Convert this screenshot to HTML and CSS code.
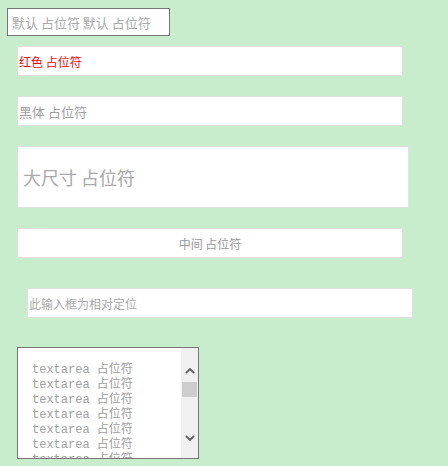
FILE: index.html
```html
<!DOCTYPE html>
<html lang="zh-CN">
<head>
<meta charset="utf-8">
<title>占位符</title>
<link rel="stylesheet" href="styles.css">
</head>
<body>
<input class="field f-default" type="text" placeholder="默认 占位符 默认 占位符">
<input class="field f-wide f-red" type="text" placeholder="红色 占位符">
<input class="field f-wide f-hei" type="text" placeholder="黑体 占位符">
<input class="field f-big" type="text" placeholder="大尺寸 占位符">
<input class="field f-wide f-center" type="text" placeholder="中间 占位符">
<input class="field f-wide f-rel" type="text" placeholder="此输入框为相对定位">
<div class="ta-box">
<textarea class="ta" readonly>textarea 占位符
textarea 占位符
textarea 占位符
textarea 占位符
textarea 占位符
textarea 占位符
textarea 占位符
textarea 占位符
textarea 占位符
textarea 占位符</textarea>
<div class="sbar">
<svg class="chev" width="10" height="6" viewBox="0 0 10 6"><path d="M1 5 L5 1 L9 5" fill="none" stroke="#606060" stroke-width="1.8"/></svg>
<div class="thumb"></div>
<div class="sbar-fill"></div>
<svg class="chev chev-down" width="10" height="6" viewBox="0 0 10 6"><path d="M1 1 L5 5 L9 1" fill="none" stroke="#606060" stroke-width="1.8"/></svg>
</div>
</div>
</body>
</html>
```
FILE: styles.css
```css
* { box-sizing: border-box; }
html, body { margin: 0; padding: 0; }
body {
  background: #c7edcc;
  display: flex;
  flex-direction: column;
  align-items: flex-start;
  width: 448px;
  height: 466px;
  overflow: hidden;
  font-family: "Noto Sans CJK SC", sans-serif;
}
.field {
  display: block;
  margin: 0;
  outline: none;
  background: #fff;
  font-family: "Noto Sans CJK SC", sans-serif;
  font-size: 12px;
  color: #333;
}
.field::placeholder { color: #a9a9a9; opacity: 1; }

.f-default {
  margin: 8px 0 0 7px;
  width: 163px;
  height: 28px;
  border: 1px solid #767676;
  padding: 0 4px;
  font-size: 13px;
}
.f-wide {
  margin-left: 17px;
  width: 386px;
  height: 30px;
  border: 1px solid #e0e0e0;
  padding: 0 1px;
}
.f-red { margin-top: 10px; }
.f-red::placeholder { color: #ff0000; }
.f-hei { margin-top: 20px; font-size: 13px; }
.f-hei::placeholder { color: #a0a0a0; }
.f-big {
  margin: 20px 0 0 17px;
  width: 392px;
  height: 62px;
  border: 1px solid #e0e0e0;
  padding: 0 5px;
  font-size: 18px;
}
.f-big::placeholder { color: #a9a9a9; }
.f-center { margin-top: 20px; text-align: center; }
.f-center::placeholder { color: #999; }
.f-rel { margin-top: 30px; margin-left: 27px; }

.ta-box {
  margin: 29px 0 0 17px;
  width: 182px;
  height: 112px;
  border: 1px solid #767676;
  background: #fff;
  display: flex;
}
.ta {
  flex: 1;
  min-width: 0;
  border: none;
  outline: none;
  resize: none;
  overflow: hidden;
  padding: 15px 0 0 14px;
  margin: 0;
  font-family: "Liberation Mono", "Noto Sans CJK SC", monospace;
  font-size: 12px;
  line-height: 15px;
  color: #a0a0a0;
  background: #fff;
  white-space: pre;
}
.sbar {
  width: 17px;
  background: #f0f0f0;
  display: flex;
  flex-direction: column;
  align-items: center;
  padding-top: 20px;
  padding-bottom: 17px;
}
.chev { display: block; flex: none; }
.thumb {
  margin-top: 8px;
  width: 15px;
  height: 15px;
  background: #cdcdcd;
}
.sbar-fill { flex: 1; }
```
